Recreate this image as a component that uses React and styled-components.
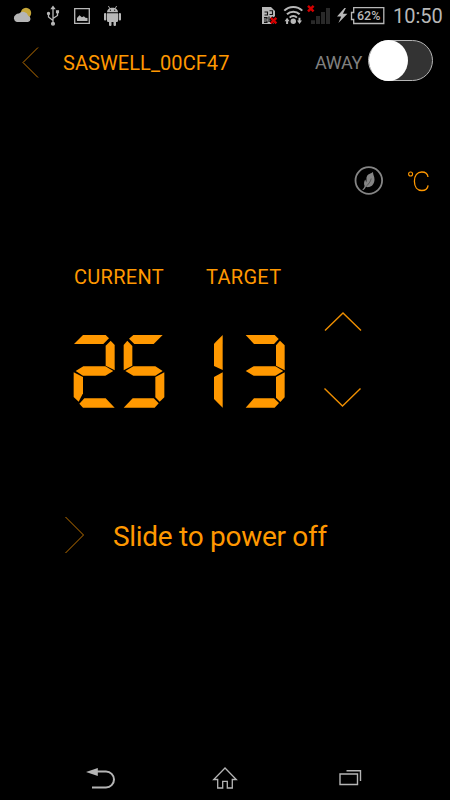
import React from 'react';
import styled, { createGlobalStyle } from 'styled-components';

const ORANGE = '#ff9800';
const GREY = '#b8b8b8';

const GlobalStyle = createGlobalStyle`
  body {
    margin: 0;
    background: #000;
    font-family: Roboto, "Noto Sans", sans-serif;
  }
`;

const Screen = styled.main`
  width: 450px;
  height: 800px;
  display: flex;
  flex-direction: column;
  background: #000;
  overflow: hidden;
`;

const StatusBar = styled.header`
  height: 32px;
  display: flex;
  justify-content: space-between;
`;

const StatusIcons = styled.svg`
  display: block;
  width: ${({ $width }) => $width}px;
  height: 32px;
`;

const StatusRight = styled.div`
  display: flex;
  width: 190px;
`;

const Battery = styled.div`
  width: 36px;
  height: 32px;
  display: grid;
  & > * {
    grid-area: 1 / 1;
  }
`;

const Label = styled.span`
  display: block;
  white-space: nowrap;
  color: ${({ $color }) => $color || ORANGE};
  font-size: ${({ $size }) => $size}px;
  line-height: ${({ $line }) => $line}px;
  letter-spacing: ${({ $spacing }) => $spacing || 0}px;
  font-weight: ${({ $weight }) => $weight || 400};
  margin-left: ${({ $indent }) => $indent || 0}px;
`;

const TitleBar = styled.div`
  height: 62px;
  display: grid;
  grid-template-columns: 63px 252px 53px 82px;
`;

const Icon = styled.svg`
  display: block;
  fill: none;
`;

const Switch = styled.div`
  box-sizing: border-box;
  width: 65px;
  height: 41px;
  margin-top: 8px;
  border: 1px solid #b5b5b5;
  border-radius: 21px;
  background: #333;
`;

const Knob = styled.div`
  width: 39px;
  height: 41px;
  margin: -1px 0 0 -0.5px;
  border-radius: 50%;
  background: #fff;
`;

const ModeRow = styled.div`
  height: 36px;
  margin-top: 69px;
  padding-left: 353px;
  display: flex;
`;

const Readings = styled.section`
  margin-top: 65px;
  height: 151px;
  display: grid;
  grid-template-columns: 132px 117px 60px;
  padding-left: 73px;
`;

const Reading = styled.div`
  display: flex;
  flex-direction: column;
`;

const Digits = styled.div`
  display: flex;
  gap: ${({ $gap }) => $gap}px;
  height: 73px;
  margin: 45px 0 0 ${({ $shift }) => $shift || 0}px;
`;

const Stepper = styled.div`
  display: flex;
  flex-direction: column;
  gap: 53px;
  padding-top: 46px;
`;

const SlideRow = styled.div`
  margin-top: 96px;
  height: 48px;
  padding-left: 63px;
  display: flex;
`;

const NavBar = styled.nav`
  height: 45px;
  margin-top: auto;
  padding: 0 84px;
  display: flex;
  justify-content: space-between;
`;

const SEGMENTS = {
  2: [
    '3,27 30,0 98,0 108,10 91,27',
    '113,17 125,30 125,106 98,92 98,32',
    '8,108 31,94 97,94 121,108 97,122 30,122',
    '2,112 30,126 30,175 17,200 2,186',
    '34,190 98,190 125,218 30,218 19,206',
  ],
  5: [
    '18,11 31,0 119,0 92,27 34,27',
    '13,17 28,33 28,92 2,106 2,30',
    '7,108 31,94 97,94 119,108 97,122 31,122',
    '97,126 124,112 124,187 110,200 97,187',
    '29,190 92,190 107,205 95,218 2,218',
  ],
  1: [
    '39,26 65,0 65,105 39,93',
    '39,126 65,112 65,218 39,192',
  ],
  3: [
    '8,0 95,0 107,12 93,27 33,27',
    '111,17 125,31 125,106 99,92 99,31',
    '8,108 32,94 97,94 121,108 97,122 32,122',
    '99,126 125,112 125,187 112,201 99,188',
    '33,190 93,190 108,204 95,218 8,218',
  ],
};

const DigitSvg = styled.svg`
  width: 42px;
  height: 73px;
  flex: none;
  fill: ${ORANGE};
`;

function Digit({ value }) {
  return (
    <DigitSvg viewBox="0 0 126 219" aria-label={String(value)}>
      {SEGMENTS[value].map((points) => (
        <polygon key={points} points={points} />
      ))}
    </DigitSvg>
  );
}

function NotificationIcons() {
  return (
    <StatusIcons $width={130} viewBox="0 0 130 32">
      <circle cx="26" cy="13" r="5.2" fill="#c5a639" />
      <path d="M16.8 22a4 4 0 0 1-.8-7.4 3.4 3.4 0 0 1 3-1.1 5.4 5.4 0 0 1 9.2 2.3A3.2 3.2 0 0 1 28 22z" fill="#b5b5b5" />
      <g fill="none" stroke={GREY} strokeWidth="1.3">
        <path d="M53 8v15M48.5 14v3l4.5 3.5M57.5 12v3.5L53 18.5" />
        <circle cx="53" cy="23.7" r="1.4" fill={GREY} />
        <circle cx="48.5" cy="13.5" r="1" fill={GREY} />
        <path d="M56.6 10.8h1.8v1.8h-1.8z" fill={GREY} />
      </g>
      <path d="M50.3 9.2 53 5.5l2.7 3.7z" fill={GREY} />
      <path d="M74.7 8.7h14.6v14.6H74.7z" fill="none" stroke={GREY} strokeWidth="1.3" />
      <path d="M77 21v-3l2.5-2.7 2.4 2 2-1 1.6 1.4 2 .3V21z" fill={GREY} />
      <g fill={GREY}>
        <path d="M107 12.3c0-2.6 2.2-4.6 5.5-4.6s5.5 2 5.5 4.6z" />
        <path d="M107 13.2h11v7.6a1.2 1.2 0 0 1-1.2 1.2h-8.6a1.2 1.2 0 0 1-1.2-1.2z" />
        <rect x="104" y="13" width="2.3" height="7.5" rx="1.1" />
        <rect x="118.7" y="13" width="2.3" height="7.5" rx="1.1" />
        <rect x="109" y="21" width="2.5" height="5" rx="1.1" />
        <rect x="113.5" y="21" width="2.5" height="5" rx="1.1" />
        <path d="m108.4 6 1.7 3M116.6 6l-1.7 3" stroke={GREY} strokeWidth=".9" />
      </g>
      <circle cx="110.4" cy="10.2" r=".6" />
      <circle cx="114.7" cy="10.2" r=".6" />
    </StatusIcons>
  );
}

function SignalIcons() {
  return (
    <StatusIcons $width={90} viewBox="260 0 90 32">
      <path d="M262 7h9l4 4v13h-13z" fill={GREY} />
      <path d="M264.5 12h3v3h-3m5-4.3h3v3.8h-3M264 17.5h3v1.5h-3m0 2h3v1.5h-3M269 16.5V22" fill="none" stroke="#111" strokeWidth="1.1" />
      <path d="m270.8 17.8 5.2 5.2m0-5.2-5.2 5.2" stroke="#000" strokeWidth="4.2" />
      <path d="m270.8 17.8 5.6 5.6m0-5.6-5.6 5.6" stroke="#d40000" strokeWidth="2.4" />
      <g fill="none" stroke={GREY} strokeWidth="2">
        <path d="M284.3 10.6a12.8 12.8 0 0 1 18 0M287 14.3a8.8 8.8 0 0 1 12.6 0M289.7 17.6a5 5 0 0 1 7.2 0" />
      </g>
      <circle cx="293.3" cy="21.2" r="2.7" fill={GREY} />
      <path d="m284.6 21.3 2.5-3.5 2.5 3.5h-1.5V24h-2v-2.7zM297 20.5l2.5 3.5 2.5-3.5h-1.5v-2.7h-2v2.7z" fill={GREY} />
      <path d="m308 5.8 5.6 5.6m0-5.6-5.6 5.6" stroke="#d40000" strokeWidth="2.4" />
      <path d="M311 20.3h4V24h-4zM316 16h4v8h-4zM321 12h4v12h-4zM326 8h4v16h-4z" fill="#292929" />
      <path d="m344.5 8-7.5 8.6h4.2l-2.8 6.4 9-9.2h-4.5l3-5.8z" fill={GREY} />
    </StatusIcons>
  );
}

function LeafIcon() {
  return (
    <Icon width="32" height="36" viewBox="353 163 32 36">
      <circle cx="368.8" cy="180.5" r="13.3" stroke="#858585" strokeWidth="1.8" />
      <path
        d="M373 172c-.2 2.5 1.7 4.6 1.5 7.8-.2 3.5-1.7 6.2-5.3 7.2-1.2.3-2.4.2-3.2-.4-.5 1.5-1.3 2.6-2.6 3.5l-1.2-.6c1.5-.9 1.9-1.9 2.4-3.4-.8-1.8-.8-4.2.6-6.5.5 1 .8 1.7.9 2.8 1-2.6-.4-4.3 1-6.7 1.3-2 4-2 5.9-3.7z"
        fill="#858585"
      />
      <path d="M371.2 178.5c-.4 2.6-2.2 4.9-4.3 7.2" stroke="#222" strokeWidth=".5" />
    </Icon>
  );
}

export default function App() {
  return (
    <>
      <GlobalStyle />
      <Screen>
        <StatusBar>
          <NotificationIcons />
          <StatusRight>
            <SignalIcons />
            <Battery>
              <StatusIcons $width={36} viewBox="350 0 36 32">
                <path d="M353.7 7.7h30.1v15.8h-30.1v-4h-2.2v-7h2.2z" fill="none" stroke={GREY} strokeWidth="1.3" />
              </StatusIcons>
              <Label $color={GREY} $size={12.5} $line={31} $weight={500} $indent={7}>62%</Label>
            </Battery>
            <Label $color={GREY} $size={20} $line={33} $indent={7}>10:50</Label>
          </StatusRight>
        </StatusBar>

        <TitleBar>
          <Icon width="63" height="62" viewBox="0 32 63 62">
            <path d="m38 47.5-15 15 15 15" stroke="#bd7100" strokeWidth="1" />
          </Icon>
          <Label $size={20} $line={62} $spacing={0.07}>SASWELL_00CF47</Label>
          <Label $color="#808080" $size={18} $line={62} $spacing={-0.35}>AWAY</Label>
          <Switch><Knob /></Switch>
        </TitleBar>

        <ModeRow>
          <LeafIcon />
          <Icon width="50" height="36" viewBox="385 163 50 36">
            <circle cx="410.6" cy="174" r="2" stroke={ORANGE} strokeWidth="1.1" />
            <path d="M428 177c-.3-3-2.7-5-6.2-5-4.4 0-7.4 3.6-7.4 9.3s3 9.2 7.4 9.2c3.5 0 5.9-2 6.3-5.2" stroke={ORANGE} strokeWidth="1.3" />
          </Icon>
        </ModeRow>

        <Readings>
          <Reading>
            <Label $size={20} $line={26} $indent={1} $spacing={0.3}>CURRENT</Label>
            <Digits $gap={8}><Digit value={2} /><Digit value={5} /></Digits>
          </Reading>
          <Reading>
            <Label $size={20} $line={26} $indent={1} $spacing={0.3}>TARGET</Label>
            <Digits $gap={0.33} $shift={-4}><Digit value={1} /><Digit value={3} /></Digits>
          </Reading>
          <Stepper>
            <Icon width="44" height="24" viewBox="322 310 44 24">
              <path d="M325 330.5 343 313l18 17.5" stroke="#ee8e00" strokeWidth="1.4" />
            </Icon>
            <Icon width="44" height="24" viewBox="322 387 44 24">
              <path d="m324.5 388.5 18 17.5 18-17.5" stroke="#ee8e00" strokeWidth="1.4" />
            </Icon>
          </Stepper>
        </Readings>

        <SlideRow>
          <Icon width="50" height="48" viewBox="63 511 50 48">
            <path d="m65.5 517 18 18-18 18" stroke="#bd7100" strokeWidth="1" />
          </Icon>
          <Label $size={28} $line={52} $spacing={-0.29}>Slide to power off</Label>
        </SlideRow>

        <NavBar>
          <Icon width="34" height="45" viewBox="84 755 34 45">
            <path d="M86 772l11.8-4v8z" fill="#b5b5b5" />
            <path d="M96 771.5h10a8 8 0 0 1 0 16H92" stroke="#b5b5b5" strokeWidth="2" />
          </Icon>
          <Icon width="34" height="45" viewBox="208 755 34 45">
            <path d="m225 768-11.3 11.5h4V788h5v-6.7h4.6v6.7h5v-8.5h4z" stroke="#b5b5b5" strokeWidth="1.3" />
          </Icon>
          <Icon width="34" height="45" viewBox="332 755 34 45">
            <path d="M340 774h17.5v10.5H340zM346.5 770.7h14V781" stroke="#b5b5b5" strokeWidth="1.4" />
          </Icon>
        </NavBar>
      </Screen>
    </>
  );
}
